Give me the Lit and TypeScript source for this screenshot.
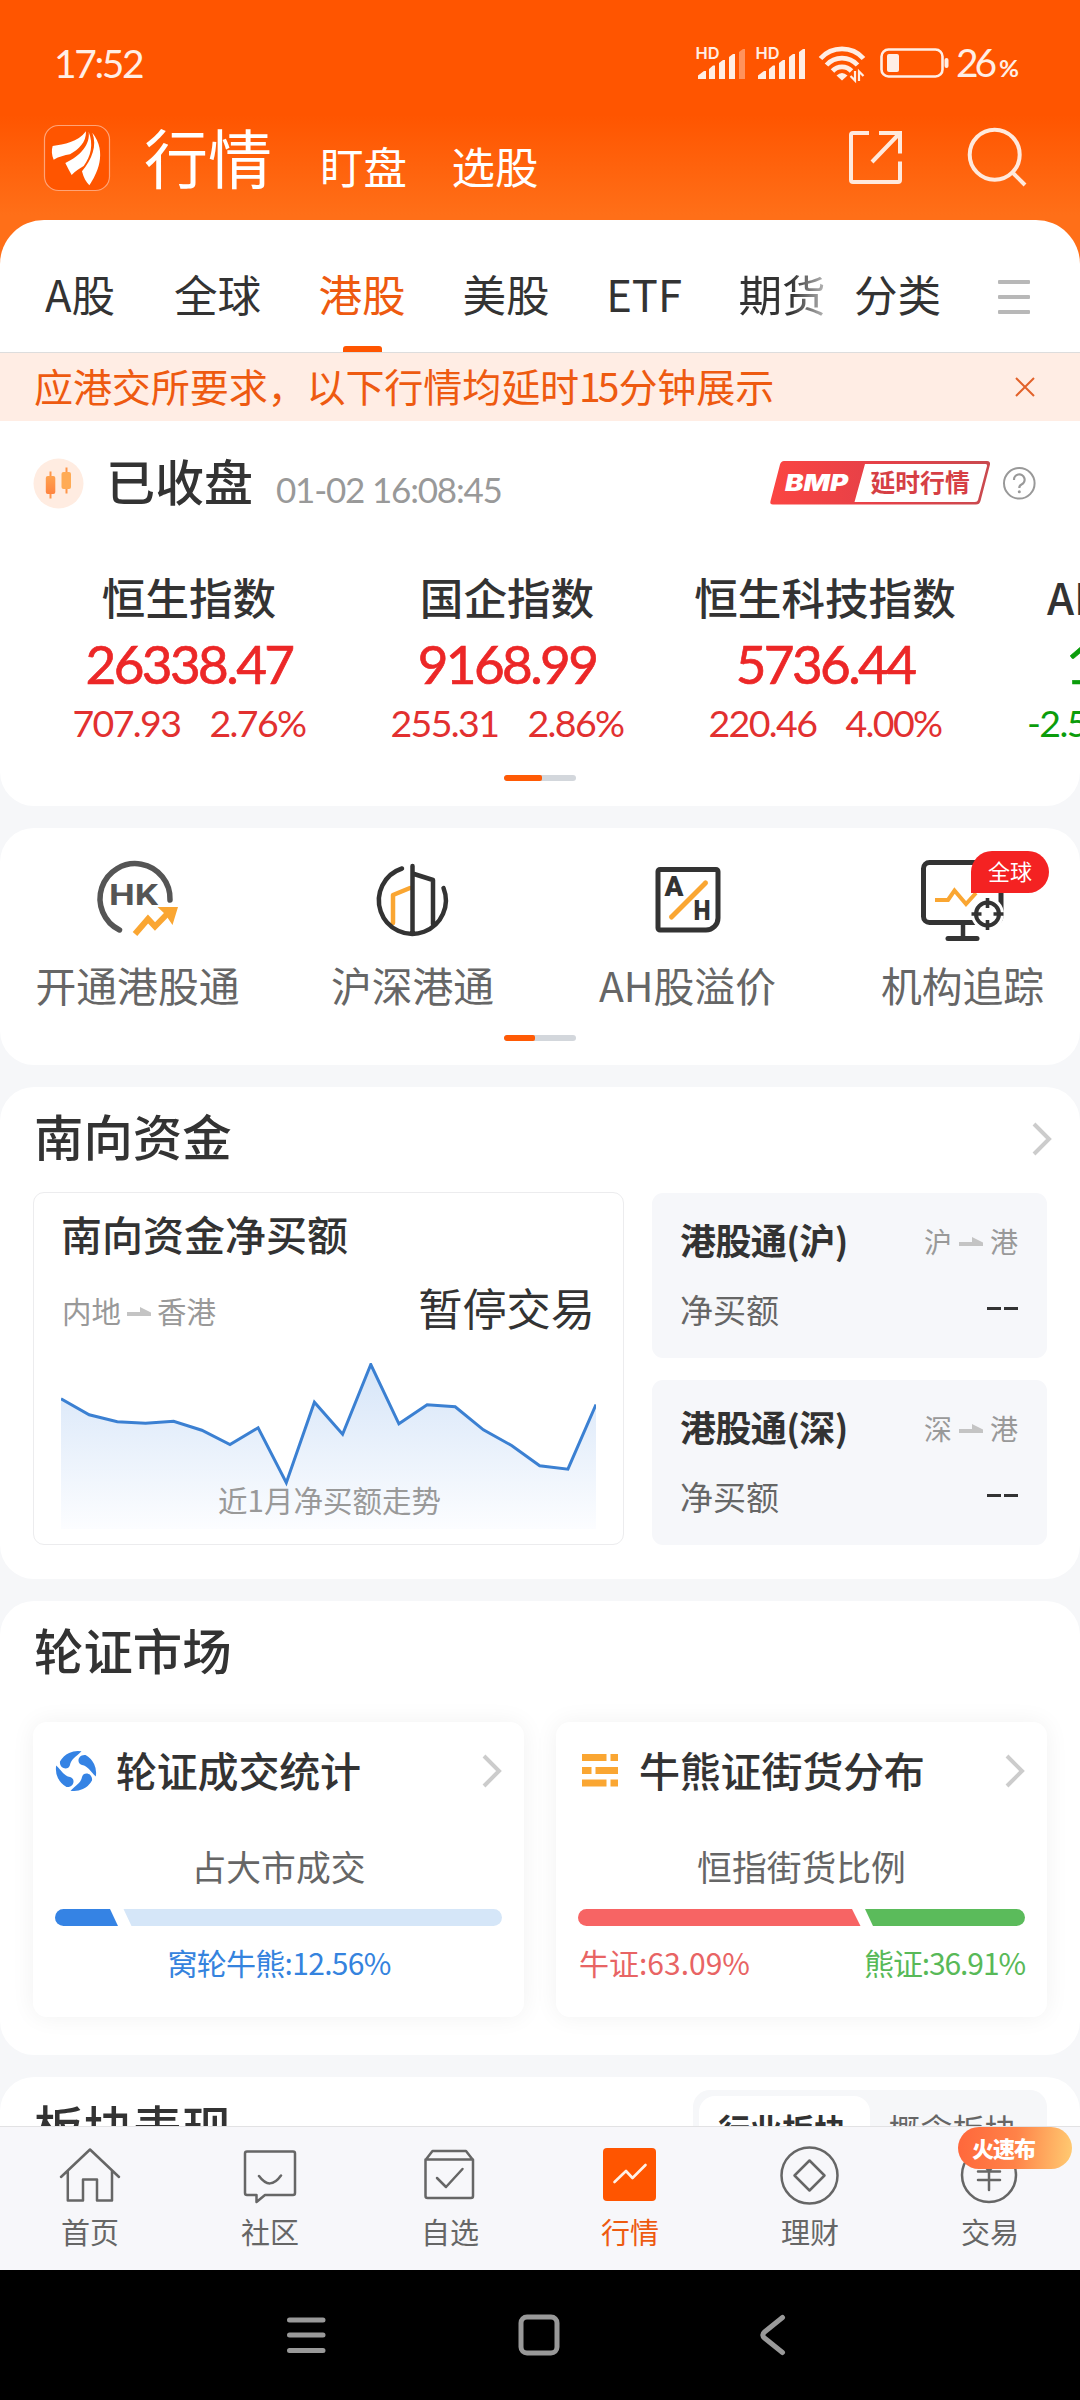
import { LitElement, html, css, svg } from "lit";
import { customElement } from "lit/decorators.js";

interface IndexQuote { name: string; value: string; change: string; percent: string }
interface NavItem { label: string; icon: unknown; active?: boolean; tag?: string }

const quotes: IndexQuote[] = [
  { name: "恒生指数", value: "26338.47", change: "707.93", percent: "2.76%" },
  { name: "国企指数", value: "9168.99", change: "255.31", percent: "2.86%" },
  { name: "恒生科技指数", value: "5736.44", change: "220.46", percent: "4.00%" },
];

const trend = [955, 1003, 1024, 1028, 1022, 1049, 1092, 1042, 1207, 965, 1061, 852, 1030, 973, 979, 1048, 1095, 1156, 1166, 972]
  .map((v, i) => `${(i * 28.16).toFixed(1)},${((v - 852) / 3 + 1.5).toFixed(1)}`);

const chevron = html`<svg class="chev" width="20" height="34" viewBox="0 0 20 34"><path d="M2 2 L17 17 L2 32" fill="none" stroke="#ccc" stroke-width="4"/></svg>`;
const arrow = html`<svg class="arrow" width="24" height="10" viewBox="0 0 24 10"><path d="M0 5 H13 V0 L24 5.5 V9 H0 Z" fill="#c4c4c4"/></svg>`;

const quickItems = [
  {
    label: "开通港股通",
    icon: svg`<path d="M119.500 930 A35 35 0 1 1 170 900" fill="none" stroke="#555" stroke-width="5.500" stroke-linecap="round"/>
      <text x="109" y="904.500" font-family="Roboto, sans-serif" font-weight="700" font-size="30" textLength="49" lengthAdjust="spacingAndGlyphs" fill="#555">HK</text>
      <path d="M135 934 L148 919 L155 926.500 L170 911" fill="none" stroke="#faa632" stroke-width="6"/>
      <path d="M157.500 907 H178 L172.500 925 L165 914 Z" fill="#faa632"/>`,
    x: 90,
  },
  {
    label: "沪深港通",
    icon: svg`<g fill="none" stroke-width="4.500" stroke-linecap="round" stroke-linejoin="round"><path d="M393 923 V895 L410 888" stroke="#faa632"/>
      <path d="M402 868.500 A33.500 33.500 0 1 0 443.500 888 M412.500 866 V933 M412.500 873.500 L433 880 V924" stroke="#333"/></g>`,
    x: 365,
  },
  {
    label: "AH股溢价",
    icon: svg`<path d="M660 869.500 H716 A2 2 0 0 1 718 871.500 V918 A12 12 0 0 1 706 930 H660 A2 2 0 0 1 658 928 V871.500 A2 2 0 0 1 660 869.500 Z" fill="none" stroke="#333" stroke-width="5"/>
      <path d="M705.500 883 L671.500 917" stroke="#faa632" stroke-width="5" stroke-linecap="round"/>
      <text x="664.500" y="896" font-family="Roboto, sans-serif" font-weight="900" font-size="27" textLength="19" lengthAdjust="spacingAndGlyphs" fill="#333">A</text>
      <text x="693.500" y="919.500" font-family="Roboto, sans-serif" font-weight="900" font-size="27" textLength="17" lengthAdjust="spacingAndGlyphs" fill="#333">H</text>`,
    x: 640,
  },
  {
    label: "机构追踪",
    tag: "全球",
    icon: svg`<rect x="923.500" y="862.500" width="77.500" height="60" rx="6" fill="none" stroke="#333" stroke-width="5"/>
      <path d="M963 924 V938" stroke="#333" stroke-width="4.500"/><path d="M948 938.500 H977" stroke="#333" stroke-width="5" stroke-linecap="round"/>
      <path d="M935 900 H948 L954.500 890.500 L966 904 L976 893" fill="none" stroke="#faa632" stroke-width="4"/>
      <circle cx="987.500" cy="914" r="16.500" fill="#fff"/>
      <circle cx="987.500" cy="914" r="11.500" fill="#fff" stroke="#333" stroke-width="4"/>
      <path d="M987.500 898 V908 M987.500 920 V930 M971.500 914 H981.500 M993.500 914 H1003.500" stroke="#333" stroke-width="3.600"/>`,
    x: 915,
  },
];

const navItems: NavItem[] = [
  { label: "首页", icon: svg`<path d="M61 2177 L90 2149.500 L119 2177 M67.800 2171 V2200.500 H83 V2179.500 H97 V2200.500 H112 V2171"/>` },
  { label: "社区", icon: svg`<g transform="translate(-180 0)"><path d="M247 2151.500 H293 A2 2 0 0 1 295 2153.500 V2193 A2 2 0 0 1 293 2195 H265 L256.500 2202 V2195 H247 A2 2 0 0 1 245 2193 V2153.500 A2 2 0 0 1 247 2151.500 Z M259 2176 Q270 2191 281 2175.500"/></g>` },
  { label: "自选", icon: svg`<g transform="translate(-360 0)"><path d="M425.500 2160 L432.500 2151 H466 L473 2160 V2196 A2 2 0 0 1 471 2198 H427.500 A2 2 0 0 1 425.500 2196 Z M425.500 2159.500 H473 M437 2178 L446 2187 L462.500 2169"/></g>` },
  { label: "行情", active: true, icon: svg`<g transform="translate(-540 0)"><rect x="603" y="2148" width="53" height="53" rx="4" fill="#ff5500" stroke="none"/><path d="M614.500 2182 L626 2171 L632.500 2178 L645.500 2165" stroke="#fff1e8" stroke-width="2.600"/></g>` },
  { label: "理财", icon: svg`<g transform="translate(-720 0)"><circle cx="809.500" cy="2175.500" r="28"/><path d="M809.500 2160.500 L824.500 2175.500 L809.500 2190.500 L794.500 2175.500 Z"/></g>` },
  { label: "交易", tag: "火速布", icon: svg`<g transform="translate(-900 0)"><circle cx="989" cy="2175" r="27"/><path d="M979 2160 L989 2171 L999 2160 M978 2171.500 H1000 M978 2180 H1000 M989 2171 V2190"/></g>` },
];

@customElement("app-root")
export class AppRoot extends LitElement {
  static styles = css`
    :host { display: flex; flex-direction: column; width: 1080px; height: 2400px; overflow: hidden; background: #f6f7f9; color: #333; font-family: "Noto Sans CJK SC", sans-serif; white-space: nowrap; }
    * { box-sizing: border-box; }
    svg { display: block; flex: none; }
    .num { font-family: Lato, sans-serif; }
    .top { height: 353px; flex: none; background: linear-gradient(#ff5500 0, #ff5500 115px, #ff6f18 215px); display: flex; flex-direction: column; }
    .status { height: 110px; display: flex; justify-content: space-between; padding: 39px 60px 0 54px; color: #ffeee5; }
    .status svg { margin-top: 4px; }
    .clock { font-size: 39px; line-height: 48px; letter-spacing: -2.400px; }
    .head { height: 110px; display: flex; align-items: flex-start; padding: 0 53px 0 43px; color: #fff; }
    .logo { margin-top: 14px; }
    .h1 { font-size: 64px; line-height: 64px; margin: 13px 0 0 33px; }
    .h2 { font-size: 43.500px; line-height: 44px; margin-top: 34px; }
    .h2.a { margin-left: 48px; }
    .h2.b { margin-left: 44.500px; }
    .tools { margin-left: auto; margin-top: 14px; }
    .tabs { height: 133px; background: #fff; border-radius: 44px 44px 0 0; border-bottom: 1px solid #ddd; display: flex; align-items: flex-start; padding: 50px 50px 0 45px; font-size: 43.600px; line-height: 46px; }
    .tab { display: flex; flex-direction: column; align-items: center; }
    .tab.on { color: #ee5a10; }
    .tab.on::after { content: ""; width: 39px; height: 6px; background: #ff5500; border-radius: 3px 3px 0 0; margin-top: 30px; }
    .t0 { width: 71px; } .t1 { width: 87px; margin-left: 59px; } .t2 { width: 87px; margin-left: 57.500px; } .t3 { width: 87px; margin-left: 57px; }
    .t4 { width: 78px; margin-left: 56px; } .t5 { width: 87px; margin-left: 56px; background: linear-gradient(90deg, #333 60%, #bbb 100%); background-clip: text; -webkit-background-clip: text; color: transparent; }
    .t6 { width: 87px; margin-left: 28.500px; }
    .burger { margin: 10px 0 0 57px; display: flex; flex-direction: column; gap: 11px; }
    .burger i { width: 32px; height: 4px; border-radius: 1px; background: #b8b8b8; }
    .notice { height: 68px; flex: none; background: #ffede4; color: #ee5a10; display: flex; align-items: center; justify-content: space-between; padding: 0 45px 4px 34px; font-size: 39.100px; line-height: 50px; }
    .notice span { letter-spacing: -.15px; }
    .notice svg { margin-top: 4px; }
    .notice b { font-weight: 400; letter-spacing: -3px; margin-right: 2px; }
    .card { background: #fff; border-radius: 34px; flex: none; margin-bottom: 22px; }
    .market { height: 385px; border-radius: 0 0 34px 34px; padding-top: 34px; overflow: hidden; }
    .mhead { height: 56px; display: flex; align-items: center; padding: 0 43px 0 33px; }
    .mtitle { font-size: 49px; font-weight: 500; line-height: 56px; margin: -6px 0 0 22px; }
    .mtime { font-size: 35px; letter-spacing: -1.200px; color: #999; margin-left: 23px; margin-top: 12px; }
    .badge { margin-left: auto; }
    .quotes { display: grid; grid-template-columns: 318px 318px 318px 96px; padding-left: 30px; margin-top: 60px; height: 194px; }
    .q { display: flex; flex-direction: column; align-items: center; }
    .qn { font-size: 43.600px; font-weight: 500; line-height: 50px; }
    .qv { font-size: 53px; line-height: 54px; color: #ec2727; letter-spacing: -2.600px; margin-top: 16px; -webkit-text-stroke: .7px; }
    .qc { font-size: 37.500px; line-height: 40px; color: #e23030; letter-spacing: -1.600px; display: flex; gap: 29px; margin-top: 12px; }
    .q.last { align-items: flex-start; overflow: hidden; }
    .q.last .qn { padding-left: 63px; } .q.last .qv { padding-left: 82px; color: #0b9c0b; } .q.last .qc { padding-left: 43px; color: #0b9c0b; }
    .pager { width: 72px; height: 6px; border-radius: 3px; background: #d3d7dc; margin: 10px auto 0; overflow: hidden; }
    .pager i { display: block; height: 6px; background: #ff5a05; border-radius: 2px; width: 38px; }
    .pager.s i { width: 31px; }
    .quick { height: 237px; }
    .qgrid { display: grid; grid-template-columns: repeat(4, 275px); height: 207px; }
    .qi { display: flex; flex-direction: column; align-items: center; position: relative; padding-top: 23px; }
    .ql { font-size: 40.800px; line-height: 48px; color: #666; margin-top: 20px; }
    .qtag { position: absolute; left: 146px; top: 23px; width: 78px; height: 42px; border-radius: 21px 21px 21px 0; background: #f42222; color: #fff; font-size: 22px; line-height: 39px; text-align: center; }
    .quick .pager { margin-top: 0; }
    .south { height: 492px; }
    .sec { display: flex; align-items: center; justify-content: space-between; font-size: 49.400px; font-weight: 500; line-height: 60px; padding: 0 28px 0 34px; }
    .south .sec { padding-top: 18px; }
    .sec .chev { margin-top: 8px; }
    .sgrid { display: grid; grid-template-columns: 591px 395px; gap: 28px; padding: 27px 33px 0; }
    .net { height: 353px; border: 1.500px solid #ececee; border-radius: 11px; padding: 16px 26px 0 27px; }
    .nt { font-size: 41px; font-weight: 500; line-height: 48px; }
    .nr { display: flex; align-items: center; justify-content: space-between; height: 50px; margin-top: 28px; font-size: 44.200px; line-height: 50px; }
    .nr > span:last-child { margin: -6px 2px 0 0; }
    .dir { display: flex; align-items: center; gap: 6px; font-size: 29.500px; color: #999; }
    .dir .arrow { margin-top: 3px; }
    .nr .dir { margin-left: 1px; }
    .chart { width: 535px; height: 168px; margin-top: 27.500px; position: relative; }
    .cap { position: absolute; left: 2px; right: 0; top: 115px; text-align: center; font-size: 29.500px; line-height: 42px; color: #999; }
    .side { display: flex; flex-direction: column; gap: 22px; padding-top: 1px; }
    .sc { height: 165px; border-radius: 11px; background: #f6f7fa; padding: 24px 29px 0 28px; display: flex; flex-direction: column; gap: 26px; }
    .sc div { display: flex; justify-content: space-between; align-items: center; }
    .sc .s1 { font-size: 36px; font-weight: 700; height: 44px; }
    .sc .s1 > span:first-child { letter-spacing: -.6px; }
    .sc .dir { font-weight: 400; font-size: 28px; gap: 7px; margin-top: 3px; }
    .s2 { font-size: 33px; color: #666; height: 44px; }
    .dash { display: flex; gap: 3px; margin-top: -2px; }
    .dash i { width: 14px; height: 3px; background: #333; }
    .warrant { height: 454px; }
    .warrant .sec { padding-top: 18px; }
    .wgrid { display: grid; grid-template-columns: 491px 491px; gap: 32px; padding: 43px 33px 0; }
    .wc { height: 295px; border-radius: 14px; background: #fff; box-shadow: 0 0 24px rgba(0,0,0,.06); padding: 23px 22px 0; }
    .wh { height: 52px; display: flex; align-items: center; font-size: 41px; font-weight: 500; }
    .wh span { margin: -4px auto 0 19px; letter-spacing: -.2px; }
    .wc:last-child .wh span { margin-left: 20px; }
    .ws { font-size: 34.800px; line-height: 44px; color: #666; text-align: center; margin-top: 47px; }
    .bar { margin-top: 21px; }
    .wl { display: flex; justify-content: space-between; font-size: 30px; line-height: 40px; letter-spacing: -.3px; margin-top: 16px; padding-left: 1px; }
    .wl.c { justify-content: center; color: #3583de; letter-spacing: -.7px; }
    .red { color: #e86464; letter-spacing: 0; } .green { color: #58b958; letter-spacing: -1.100px; }
    .sector { height: 49px; border-radius: 34px 34px 0 0; margin: 0; overflow: hidden; display: flex; justify-content: space-between; padding: 0 33px 0 34px; font-size: 49.400px; font-weight: 500; line-height: 60px; }
    .sector > span { margin-top: 19px; }
    .seg { width: 354px; height: 70px; margin-top: 13px; border-radius: 17px; background: #f6f7f9; padding: 6px; display: flex; font-size: 32px; line-height: 64px; color: #666; font-weight: 400; text-align: center; }
    .seg b { width: 171px; background: #fff; border-radius: 16px; color: #333; height: 64px; padding-right: 5px; }
    .seg span { flex: 1; padding-right: 6px; }
    .nav { height: 144px; flex: none; border-top: 1px solid #e2e2e4; background: #f7f7fa; display: grid; grid-template-columns: repeat(6, 180px); }
    .ni { position: relative; display: flex; flex-direction: column; align-items: center; color: #666; font-size: 29px; line-height: 36px; padding-top: 15px; }
    .ni svg { fill: none; stroke: #666; stroke-width: 2.500; stroke-linejoin: round; stroke-linecap: round; }
    .ni span { margin-top: 3px; }
    .ni.on { color: #ee5a10; }
    .ntag { position: absolute; left: 58px; top: 0; width: 114px; height: 42px; border-radius: 21px; background: linear-gradient(95deg, #ff673b 0%, #ff8248 50%, #ffcb72 100%); color: #fff; font-size: 22px; line-height: 41px; font-weight: 900; letter-spacing: -1px; padding-left: 14px; }
    .sys { height: 130px; flex: none; background: #000; display: flex; padding: 43px 0 0 285px; }
    .sys svg:nth-child(2) { margin-left: 191px; }
    .sys svg:nth-child(3) { margin-left: 197px; }
  `;

  private renderStatus() {
    const bars = (dx: number, last: number) => svg`<g transform="translate(${dx} 0)">
      <text x="695.500" y="59" font-family="Inter, sans-serif" font-size="16.500" font-weight="600" textLength="24" lengthAdjust="spacingAndGlyphs" stroke="none">HD</text>
      <path d="M698 79 V75.500 L704 71 H706 V79 Z M709 79 V69 L713 65.500 H715 V79 Z M719 79 V63 L723 60 H725 V79 Z M729 79 V57 L733 54 H735 V79 Z"/>
      <path d="M739 79 V52 L743 49 H745 V79 Z" opacity="${last}"/></g>`;
    return html`<svg width="330" height="44" viewBox="690 43 330 44" fill="#ffeee5">
      ${bars(0, 0.4)}${bars(60, 1)}
      <g fill="none" stroke="#ffeee5" stroke-width="4.800"><path d="M820.500 58.500 A29 29 0 0 1 863.500 58.500"/><path d="M826.500 65 A21 21 0 0 1 857.500 65"/><path d="M832.500 71 A13 13 0 0 1 851.500 71"/></g>
      <path d="M836.500 75.500 Q842 70.500 847.500 75.500 L842 80.500 Z"/>
      <path d="M855 71 V80.500 L850.500 76 M859 81 V71.500 L863.500 76" stroke="#ffeee5" stroke-width="2.200" fill="none"/>
      <rect x="881.500" y="49.500" width="61" height="27" rx="7" fill="none" stroke="#ffeee5" stroke-width="2.600"/>
      <rect x="887" y="54" width="12" height="18" rx="2"/><rect x="944.500" y="58" width="4" height="10" rx="2"/>
      <text x="956" y="77" font-family="Lato, sans-serif" font-size="39" textLength="41">26</text>
      <text x="999" y="76.500" font-family="Lato, sans-serif" font-size="23" font-weight="700" textLength="20" lengthAdjust="spacingAndGlyphs">%</text>
    </svg>`;
  }

  private renderHeader() {
    return html`<div class="head">
      <svg class="logo" width="68" height="68" viewBox="43 124 68 68">
        <rect x="44.500" y="125.500" width="65" height="65" rx="14" fill="#ff5500" stroke="#ffa477" stroke-width="1.200"/>
        <g transform="translate(36 116) scale(.3333)" fill="#fff">
          <path d="M150 46 C125 80 85 84 50 90 C46 102 47 118 53 131 C70 122 85 118 102 115 C128 100 151 80 150 46 Z"/>
          <path d="M158 47 C163 85 135 118 88 141 C95 155 100 165 107 177 C118 164 130 158 143 150 C165 120 173 85 158 47 Z"/>
          <path d="M169 50 C184 90 168 128 138 166 C143 185 150 198 160 208 C182 175 216 110 169 50 Z"/>
        </g>
      </svg>
      <div class="h1">行情</div><div class="h2 a">盯盘</div><div class="h2 b">选股</div>
      <svg class="tools" width="180" height="66" viewBox="847 124 180 66" fill="none" stroke="#ffe9dd" stroke-width="4">
        <path d="M869 133 H853 A2 2 0 0 0 851 135 V180 A2 2 0 0 0 853 182 H898 A2 2 0 0 0 900 180 V161.500 M879 133 H900 V153.500 M899 134 L872 162"/>
        <circle cx="994.700" cy="154.700" r="25"/><path d="M1012 172 L1025 185"/>
      </svg>
    </div>`;
  }

  private renderMarket() {
    return html`<section class="card market">
      <div class="mhead">
        <svg width="51" height="51" viewBox="32.500 457.500 51 51">
          <defs><linearGradient id="cg" x1="0" y1="0" x2="0" y2="1"><stop offset="0" stop-color="#ffa24f"/><stop offset="1" stop-color="#ff8440"/></linearGradient></defs>
          <circle cx="58" cy="483" r="25" fill="#ffece1"/>
          <path d="M50 471 V498 M66 467 V493" stroke="#ff964a" stroke-width="2"/>
          <rect x="45.300" y="475.500" width="9.500" height="18" rx="2" fill="url(#cg)"/><rect x="61" y="471.500" width="9.500" height="17" rx="2" fill="#ffab55"/>
        </svg>
        <span class="mtitle">已收盘</span><span class="mtime num">01-02 16:08:45</span>
        <svg class="badge" width="268" height="50" viewBox="769 458 268 50">
          <defs><linearGradient id="bg" x1="0" x2="1"><stop offset="0" stop-color="#fb4542"/><stop offset=".5" stop-color="#e54048"/><stop offset="1" stop-color="#c94a4f"/></linearGradient></defs>
          <path d="M784 461 H987 Q990.500 461 990 464.500 L980.500 501 Q979.500 504.500 976 504.500 H773 Q769.500 504.500 770.500 501 L780 464.500 Q781 461 784 461 Z" fill="url(#bg)"/>
          <path d="M865 464 H985.500 Q987.500 464 987 466 L978 500 Q977.500 502 975 502 H854.500 Z" fill="#fff"/>
          <text x="785" y="491" font-family="Inter, sans-serif" font-weight="900" font-style="italic" font-size="22.500" textLength="63" lengthAdjust="spacingAndGlyphs" fill="#fff">BMP</text>
          <text x="870.500" y="491.500" font-family="Noto Sans CJK SC, sans-serif" font-weight="700" font-size="24.800" fill="#d63f45">延时行情</text>
          <circle cx="1019.300" cy="483.300" r="15.300" fill="none" stroke="#999" stroke-width="2"/>
          <path d="M1014 480 A5.300 5.300 0 1 1 1021.500 484.500 Q1019.300 485.500 1019.300 488" fill="none" stroke="#999" stroke-width="2.200"/><circle cx="1019.300" cy="491.800" r="1.500" fill="#999"/>
        </svg>
      </div>
      <div class="quotes">
        ${quotes.map((q) => html`<div class="q"><span class="qn">${q.name}</span><span class="qv num">${q.value}</span><span class="qc num"><span>${q.change}</span><span>${q.percent}</span></span></div>`)}
        <div class="q last"><span class="qn">AH</span><span class="qv num">1</span><span class="qc num">-2.5</span></div>
      </div>
      <div class="pager"><i></i></div>
    </section>`;
  }

  private renderSouth() {
    const side = (c: string) => html`<div class="sc">
      <div class="s1"><span>港股通(${c})</span><span class="dir">${c}${arrow}港</span></div>
      <div class="s2">净买额<span class="dash"><i></i><i></i></span></div></div>`;
    return html`<section class="card south">
      <div class="sec">南向资金${chevron}</div>
      <div class="sgrid">
        <div class="net">
          <div class="nt">南向资金净买额</div>
          <div class="nr"><span class="dir">内地${arrow}香港</span><span>暂停交易</span></div>
          <div class="chart">
            <svg width="535" height="168" viewBox="0 0 535 168">
              <defs><linearGradient id="ar" x1="0" y1="0" x2="0" y2="1"><stop offset="0" stop-color="#d6e5f8"/><stop offset="1" stop-color="#fcfdff"/></linearGradient></defs>
              <polygon points="0,166 ${trend.join(" ")} 535,166" fill="url(#ar)"/>
              <polyline points=${trend.join(" ")} fill="none" stroke="#3b80d2" stroke-width="3"/>
            </svg>
            <div class="cap">近1月净买额走势</div>
          </div>
        </div>
        <div class="side">${side("沪")}${side("深")}</div>
      </div>
    </section>`;
  }

  private renderWarrants() {
    const blade = "M5.500 -19.800 A20.500 20.500 0 0 0 -16 -9.500 C-17 -2 -7.500 0 -6 -6 C-5 -12 0 -14 5.500 -19.800 Z";
    return html`<section class="card warrant">
      <div class="sec">轮证市场</div>
      <div class="wgrid">
        <div class="wc">
          <div class="wh"><svg width="42" height="42" viewBox="-21 -21 42 42" fill="#3583e4">${[0, 90, 180, 270].map((a) => svg`<path d=${blade} transform="rotate(${a})"/>`)}</svg><span>轮证成交统计</span>${chevron}</div>
          <div class="ws">占大市成交</div>
          <svg class="bar" width="447" height="17" viewBox="0 0 447 17"><path d="M8.500 0 H55 L63 17 H8.500 A8.500 8.500 0 0 1 8.500 0 Z" fill="#3583e4"/><path d="M68.500 0 H438.500 A8.500 8.500 0 0 1 438.500 17 H76.500 Z" fill="#d5e6f8"/></svg>
          <div class="wl c">窝轮牛熊:12.56%</div>
        </div>
        <div class="wc">
          <div class="wh"><svg width="41" height="34" viewBox="578 1754 41 34" fill="#faa632"><path d="M582 1754 h24.500 v7 h-24.500z M610.500 1754 h7.500 v7 h-7.500z M582 1767 h9.500 v7 h-9.500z M595.500 1767 h22.500 v7 h-22.500z M582 1779.500 h24.500 v7 h-24.500z M610.500 1779.500 h7.500 v7 h-7.500z"/></svg><span>牛熊证街货分布</span>${chevron}</div>
          <div class="ws">恒指街货比例</div>
          <svg class="bar" width="447" height="17" viewBox="0 0 447 17"><path d="M8.500 0 H274 L282.500 17 H8.500 A8.500 8.500 0 0 1 8.500 0 Z" fill="#f76464"/><path d="M287 0 H438.500 A8.500 8.500 0 0 1 438.500 17 H295 Z" fill="#5bbb5b"/></svg>
          <div class="wl"><span class="red">牛证:63.09%</span><span class="green">熊证:36.91%</span></div>
        </div>
      </div>
    </section>`;
  }

  render() {
    const tabs = ["A股", "全球", "港股", "美股", "ETF", "期货", "分类"];
    return html`
      <div class="top">
        <div class="status"><span class="clock num">17:52</span>${this.renderStatus()}</div>
        ${this.renderHeader()}
        <div class="tabs">${tabs.map((t, i) => html`<span class="tab t${i} ${i === 2 ? "on" : ""}">${t}</span>`)}<span class="burger"><i></i><i></i><i></i></span></div>
      </div>
      <div class="notice"><span>应港交所要求，以下行情均延时<b>15</b>分钟展示</span><svg width="20" height="20" viewBox="0 0 20 20"><path d="M1 1 L19 19 M19 1 L1 19" stroke="#e2622a" stroke-width="2"/></svg></div>
      ${this.renderMarket()}
      <section class="card quick">
        <div class="qgrid">${quickItems.map((q) => html`<div class="qi"><svg width="95" height="90" viewBox="${q.x} 851 95 90">${q.icon}</svg><span class="ql">${q.label}</span>${q.tag ? html`<span class="qtag">${q.tag}</span>` : ""}</div>`)}</div>
        <div class="pager s"><i></i></div>
      </section>
      ${this.renderSouth()}
      ${this.renderWarrants()}
      <section class="card sector"><span>板块表现</span><div class="seg"><b>行业板块</b><span>概念板块</span></div></section>
      <div class="nav">${navItems.map((n) => html`<div class="ni ${n.active ? "on" : ""}"><svg width="68" height="68" viewBox="56 2142 68 68">${n.icon}</svg><span>${n.label}</span>${n.tag ? html`<b class="ntag">${n.tag}</b>` : ""}</div>`)}</div>
      <div class="sys">
        <svg width="42" height="44" viewBox="285 2313 42 44" stroke="#999" stroke-width="5" stroke-linecap="round"><path d="M289.500 2320 H323 M289.500 2335 H323 M289.500 2350.500 H323"/></svg>
        <svg width="42" height="44" viewBox="518 2313 42 44"><rect x="521" y="2317" width="36" height="36" rx="6" fill="none" stroke="#999" stroke-width="5"/></svg>
        <svg width="30" height="44" viewBox="757 2313 30 44"><path d="M782.500 2317.500 L764.500 2332 Q761 2335 764.500 2338 L782.500 2352.500" fill="none" stroke="#999" stroke-width="5" stroke-linecap="round"/></svg>
      </div>`;
  }
}
